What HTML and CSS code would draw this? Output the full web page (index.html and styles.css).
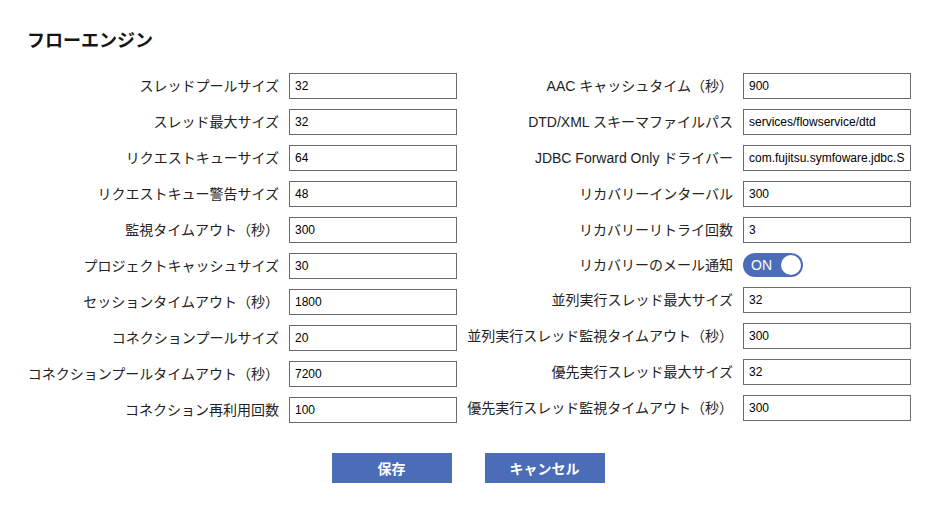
FILE: index.html
```html
<!DOCTYPE html>
<html lang="ja">
<head>
<meta charset="utf-8">
<title>フローエンジン</title>
<link rel="stylesheet" href="styles.css">
</head>
<body>
<div class="page">
  <h1 class="title">フローエンジン</h1>
  <div class="form">
    <div class="col col-left">
      <label class="lbl">スレッドプールサイズ</label><input class="field" value="32">
      <label class="lbl">スレッド最大サイズ</label><input class="field" value="32">
      <label class="lbl">リクエストキューサイズ</label><input class="field" value="64">
      <label class="lbl">リクエストキュー警告サイズ</label><input class="field" value="48">
      <label class="lbl">監視タイムアウト（秒）</label><input class="field" value="300">
      <label class="lbl">プロジェクトキャッシュサイズ</label><input class="field" value="30">
      <label class="lbl">セッションタイムアウト（秒）</label><input class="field" value="1800">
      <label class="lbl">コネクションプールサイズ</label><input class="field" value="20">
      <label class="lbl">コネクションプールタイムアウト（秒）</label><input class="field" value="7200">
      <label class="lbl">コネクション再利用回数</label><input class="field" value="100">
    </div>
    <div class="col col-right">
      <label class="lbl">AAC キャッシュタイム（秒）</label><input class="field" value="900">
      <label class="lbl">DTD/XML スキーマファイルパス</label><input class="field" value="services/flowservice/dtd">
      <label class="lbl">JDBC Forward Only ドライバー</label><input class="field" value="com.fujitsu.symfoware.jdbc.SYMDriver">
      <label class="lbl">リカバリーインターバル</label><input class="field" value="300">
      <label class="lbl">リカバリーリトライ回数</label><input class="field" value="3">
      <label class="lbl">リカバリーのメール通知</label>
      <div class="toggle-cell"><span class="toggle"><span class="toggle-text">ON</span><span class="knob"></span></span></div>
      <label class="lbl">並列実行スレッド最大サイズ</label><input class="field" value="32">
      <label class="lbl">並列実行スレッド監視タイムアウト（秒）</label><input class="field" value="300">
      <label class="lbl">優先実行スレッド最大サイズ</label><input class="field" value="32">
      <label class="lbl">優先実行スレッド監視タイムアウト（秒）</label><input class="field" value="300">
    </div>
  </div>
  <div class="actions">
    <button class="btn">保存</button>
    <button class="btn">キャンセル</button>
  </div>
</div>
</body>
</html>
```

FILE: styles.css
```css
* { box-sizing: border-box; }
html, body { margin: 0; padding: 0; background: #fff; }
body {
  font-family: "Liberation Sans", "Noto Sans CJK JP", sans-serif;
  color: #1f1f1f;
}
.page { padding: 0 27px; }
.title {
  margin: 27px 0 0;
  font-family: "Noto Sans CJK JP", sans-serif;
  font-size: 18px;
  font-weight: 700;
  line-height: 24px;
  color: #151515;
}
.form {
  display: flex;
  gap: 10px;
  margin-top: 22px;
}
.col {
  display: grid;
  column-gap: 10px;
  row-gap: 10px;
  align-items: center;
}
.col-left { grid-template-columns: 252px 168px; }
.col-right { grid-template-columns: 266px 168px; align-content: start; }
.lbl {
  text-align: right;
  white-space: nowrap;
  font-size: 14px;
  line-height: 20px;
  color: #222;
}
.field {
  width: 168px;
  height: 26px;
  margin: 0;
  border: 1px solid #6b6b6b;
  border-radius: 0;
  padding: 0 5px;
  font-family: "Liberation Sans", sans-serif;
  font-size: 12px;
  color: #000;
  background: #fff;
  outline: none;
}
.toggle-cell { display: flex; align-items: center; }
.toggle {
  width: 60px;
  height: 24px;
  border-radius: 12px;
  background: #4b6cb7;
  display: flex;
  align-items: center;
  justify-content: space-between;
  padding: 0 2px 0 8px;
}
.toggle-text {
  color: #fff;
  font-family: "Liberation Sans", sans-serif;
  font-size: 14px;
  line-height: 1;
}
.knob {
  width: 20px;
  height: 20px;
  border-radius: 50%;
  background: #fff;
}
.actions {
  display: flex;
  justify-content: center;
  gap: 33px;
  margin-top: 30px;
  padding-right: 2px;
}
.btn {
  width: 120px;
  height: 30px;
  border: none;
  border-radius: 0;
  background: #4b6cb7;
  color: #fff;
  font-family: "Noto Sans CJK JP", sans-serif;
  font-size: 14px;
  font-weight: 700;
  padding: 0;
  cursor: pointer;
}
```
